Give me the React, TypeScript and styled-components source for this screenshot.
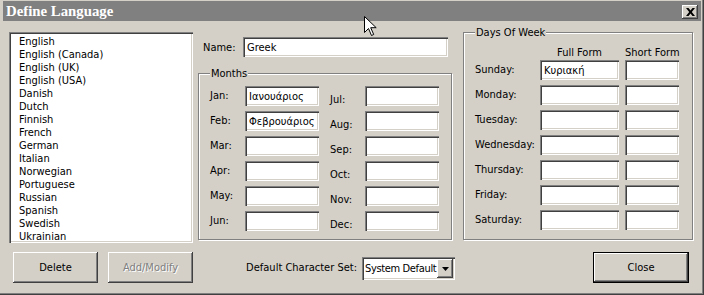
import React from 'react';
import styled, { createGlobalStyle } from 'styled-components';

const GlobalStyle = createGlobalStyle`
  html, body {
    margin: 0;
    padding: 0;
    background: #d4d0c8;
  }
  body {
    font-family: Tahoma, "DejaVu Sans Condensed", "Liberation Sans", sans-serif;
    font-size: 11px;
    color: #000;
  }
  * { box-sizing: border-box; }
`;

const sunken = `
  inset 1px 1px #808080, inset 2px 2px #404040,
  inset -1px -1px #ffffff, inset -2px -2px #d4d0c8
`;

const raised = `
  inset -1px -1px #404040, inset 1px 1px #ffffff,
  inset -2px -2px #808080, inset 2px 2px #d4d0c8
`;

const Window = styled.div`
  position: relative;
  width: 704px;
  height: 295px;
  background: #d4d0c8;
  padding: 1px 3px 3px 3px;
  box-shadow: inset -1px -1px #404040, inset -2px -2px #808080;
  display: flex;
  flex-direction: column;
  overflow: hidden;
`;

const TitleBar = styled.div`
  height: 20px;
  flex-shrink: 0;
  background: #808080;
  color: #fff;
  font-family: "Liberation Serif", "Times New Roman", serif;
  font-weight: bold;
  font-size: 14.8px;
  display: flex;
  align-items: center;
  justify-content: space-between;
  padding: 0 3px 0 3px;
`;

const CloseBox = styled.div`
  width: 16px;
  height: 14px;
  margin-top: 2px;
  background: #d4d0c8;
  box-shadow: ${raised};
  display: flex;
  align-items: center;
  justify-content: center;
`;

const Body = styled.div`
  flex: 1;
  display: flex;
  flex-direction: column;
`;

const TopRow = styled.div`
  display: flex;
  align-items: flex-start;
  padding: 5px 0 0 6px;
`;

const ListBox = styled.div`
  margin-top: 6px;
  width: 184px;
  height: 211px;
  background: #fff;
  box-shadow: ${sunken};
  padding: 3px 2px 2px 10px;
  overflow: hidden;
`;

const ListItem = styled.div`
  line-height: 13px;
  height: 13px;
  white-space: nowrap;
`;

const MiddleColumn = styled.div`
  margin-left: 5px;
  width: 254px;
  padding-top: 11px;
  display: flex;
  flex-direction: column;
`;

const NameRow = styled.div`
  display: flex;
  align-items: center;
  height: 20px;
`;

const NameLabel = styled.span`
  width: 45px;
  padding-left: 5px;
`;

const Field = styled.input<{ $w: number }>`
  width: ${(p) => p.$w}px;
  height: 20px;
  border: none;
  outline: none;
  margin: 0;
  padding: 0 0 0 4px;
  background: #fff;
  box-shadow: ${sunken};
  font: inherit;
  color: #000;
`;

const GroupBox = styled.fieldset<{ $pad: string }>`
  margin: 0;
  min-width: 0;
  border: 1px solid #808080;
  box-shadow: inset 1px 1px #fff, 1px 1px #fff;
  padding: ${(p) => p.$pad};
`;

const Caption = styled.legend`
  padding: 0 1px;
  line-height: 13px;
  background: #d4d0c8;
`;

const MonthsBox = styled(GroupBox)`
  margin-top: 10px;
`;

const MonthColumns = styled.div`
  display: flex;
  gap: 11px;
`;

const MonthColumn = styled.div`
  display: flex;
  flex-direction: column;
  gap: 5px;
`;

const FieldRow = styled.div`
  display: flex;
  align-items: center;
`;

const RowLabel = styled.span<{ $w: number; $drop?: boolean }>`
  width: ${(p) => p.$w}px;
  white-space: nowrap;
  margin-top: ${(p) => (p.$drop ? 6 : 0)}px;
  margin-bottom: ${(p) => (p.$drop ? 0 : 2)}px;
`;

const DaysBox = styled(GroupBox)`
  margin-left: 11px;
  width: 230px;
`;

const DaysGrid = styled.div`
  display: grid;
  grid-template-columns: 59px 79px 54px;
  column-gap: 6px;
  row-gap: 5px;
  align-items: center;
`;

const ColumnHead = styled.div`
  line-height: 13px;
  text-align: center;
  white-space: nowrap;
  margin-bottom: -4px;
`;

const BottomRow = styled.div`
  display: flex;
  align-items: center;
  margin-top: 9px;
  padding-left: 10px;
  height: 31px;
`;

const Button = styled.div<{ $disabled?: boolean; $w?: number }>`
  width: ${(p) => p.$w ?? 85}px;
  height: 31px;
  background: #d4d0c8;
  box-shadow: ${raised};
  display: flex;
  align-items: center;
  justify-content: center;
  color: ${(p) => (p.$disabled ? '#808080' : '#000')};
  text-shadow: ${(p) => (p.$disabled ? '1px 1px #ffffff' : 'none')};
  & + & {
    margin-left: 10px;
  }
`;

const DefaultButton = styled(Button)`
  margin-left: auto;
  margin-right: 12px;
  border: 1px solid #000;
`;

const CharsetGroup = styled.div`
  margin-left: 50px;
  display: flex;
  align-items: center;
  gap: 5px;
`;

const CharsetLabel = styled.span`
  width: 114px;
  text-align: right;
  white-space: nowrap;
`;

const Combo = styled.div`
  width: 93px;
  height: 23px;
  margin-top: 2px;
  background: #fff;
  box-shadow: ${sunken};
  display: flex;
  align-items: center;
  padding: 2px;
`;

const ComboText = styled.span`
  flex: 1;
  min-width: 0;
  padding-left: 1px;
  white-space: nowrap;
  letter-spacing: -0.35px;
`;

const DropButton = styled.div`
  flex-shrink: 0;
  width: 16px;
  height: 19px;
  background: #d4d0c8;
  box-shadow: ${raised};
  display: flex;
  align-items: center;
  justify-content: center;
`;

const Pointer = styled.svg`
  position: absolute;
  left: 364px;
  top: 16px;
`;

const languages = [
  'English',
  'English (Canada)',
  'English (UK)',
  'English (USA)',
  'Danish',
  'Dutch',
  'Finnish',
  'French',
  'German',
  'Italian',
  'Norwegian',
  'Portuguese',
  'Russian',
  'Spanish',
  'Swedish',
  'Ukrainian',
];

const monthsLeft = [
  ['Jan:', 'Ιανουάριος'],
  ['Feb:', 'Φεβρουάριος'],
  ['Mar:', ''],
  ['Apr:', ''],
  ['May:', ''],
  ['Jun:', ''],
];
const monthsRight = ['Jul:', 'Aug:', 'Sep:', 'Oct:', 'Nov:', 'Dec:'];

const days = [
  ['Sunday:', 'Κυριακή'],
  ['Monday:', ''],
  ['Tuesday:', ''],
  ['Wednesday:', ''],
  ['Thursday:', ''],
  ['Friday:', ''],
  ['Saturday:', ''],
];

const App = () => {
  return (
    <>
      <GlobalStyle />
      <Window>
        <TitleBar>
          <span>Define Language</span>
          <CloseBox>
            <svg width="9" height="8" viewBox="0 0 9 8">
              <path d="M0 0h2.5l2 2.6 2-2.6h2.5l-3.2 4 3.2 4h-2.5l-2-2.6-2 2.6h-2.5l3.2-4z" fill="#000" />
            </svg>
          </CloseBox>
        </TitleBar>
        <Body>
          <TopRow>
            <ListBox>
              {languages.map((l) => (
                <ListItem key={l}>{l}</ListItem>
              ))}
            </ListBox>
            <MiddleColumn>
              <NameRow>
                <NameLabel>Name:</NameLabel>
                <Field $w={205} defaultValue="Greek" readOnly />
              </NameRow>
              <MonthsBox $pad="6px 12px 8px 11px">
                <Caption>Months</Caption>
                <MonthColumns>
                  <MonthColumn>
                    {monthsLeft.map(([m, v]) => (
                      <FieldRow key={m}>
                        <RowLabel $w={35}>{m}</RowLabel>
                        <Field $w={74} defaultValue={v} readOnly />
                      </FieldRow>
                    ))}
                  </MonthColumn>
                  <MonthColumn>
                    {monthsRight.map((m) => (
                      <FieldRow key={m}>
                        <RowLabel $w={35} $drop>
                          {m}
                        </RowLabel>
                        <Field $w={74} readOnly />
                      </FieldRow>
                    ))}
                  </MonthColumn>
                </MonthColumns>
              </MonthsBox>
            </MiddleColumn>
            <DaysBox $pad="7px 12px 9px 11px">
              <Caption>Days Of Week</Caption>
              <DaysGrid>
                <span />
                <ColumnHead>Full Form</ColumnHead>
                <ColumnHead>Short Form</ColumnHead>
                {days.map(([d, v]) => (
                  <React.Fragment key={d}>
                    <RowLabel $w={59}>{d}</RowLabel>
                    <Field $w={79} defaultValue={v} readOnly />
                    <Field $w={54} readOnly />
                  </React.Fragment>
                ))}
              </DaysGrid>
            </DaysBox>
          </TopRow>
          <BottomRow>
            <Button>Delete</Button>
            <Button $disabled>Add/Modify</Button>
            <CharsetGroup>
              <CharsetLabel>Default Character Set:</CharsetLabel>
              <Combo>
                <ComboText>System Default</ComboText>
                <DropButton>
                  <svg width="7" height="4" viewBox="0 0 7 4">
                    <path d="M0 0h7l-3.5 4z" fill="#000" />
                  </svg>
                </DropButton>
              </Combo>
            </CharsetGroup>
            <DefaultButton $w={96}>Close</DefaultButton>
          </BottomRow>
        </Body>
        <Pointer width="13" height="21" viewBox="0 0 13 21">
          <path
            d="M0.5 0.5v16l4-4 3 7 2.2-1-3-6.8h5.5z"
            fill="#fff"
            stroke="#000"
            strokeWidth="1"
            strokeLinejoin="miter"
          />
        </Pointer>
      </Window>
    </>
  );
};

export default App;
